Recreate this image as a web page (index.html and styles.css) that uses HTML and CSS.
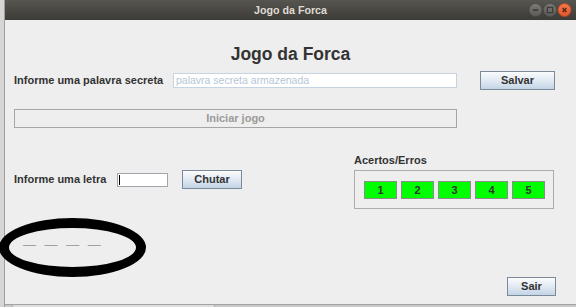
FILE: index.html
```html
<!DOCTYPE html>
<html lang="pt">
<head>
<meta charset="utf-8">
<title>Jogo da Forca</title>
<link rel="stylesheet" href="styles.css">
</head>
<body>
<div class="screen">
  <div class="side"></div>
  <div class="window">
    <header class="titlebar">
      <span class="spacer"></span>
      <span class="title">Jogo da Forca</span>
      <svg class="controls" width="44" height="20" viewBox="0 0 44 20" aria-hidden="true">
        <defs>
          <linearGradient id="gGrey" x1="0" y1="0" x2="0" y2="1">
            <stop offset="0" stop-color="#7c7b76"/>
            <stop offset="1" stop-color="#5c5b57"/>
          </linearGradient>
          <linearGradient id="gOrange" x1="0" y1="0" x2="0" y2="1">
            <stop offset="0" stop-color="#f27a4e"/>
            <stop offset="1" stop-color="#e2552a"/>
          </linearGradient>
        </defs>
        <circle cx="7.5" cy="10" r="6.5" fill="url(#gGrey)" stroke="#4a4945" stroke-width="0.8"/>
        <line x1="4.8" y1="10" x2="10.2" y2="10" stroke="#3a3935" stroke-width="1.6"/>
        <circle cx="22" cy="10" r="6.5" fill="url(#gGrey)" stroke="#4a4945" stroke-width="0.8"/>
        <rect x="19.3" y="7.3" width="5.4" height="5.4" fill="none" stroke="#3a3935" stroke-width="1.2"/>
        <circle cx="36.5" cy="10" r="6.5" fill="url(#gOrange)" stroke="#b8451f" stroke-width="0.8"/>
        <path d="M34.6 8.1 L38.4 11.9 M38.4 8.1 L34.6 11.9" stroke="#5a2412" stroke-width="1.4"/>
      </svg>
    </header>
    <main class="content">
      <h1 class="heading">Jogo da Forca</h1>
      <div class="form">
        <div class="row row-secret">
          <span class="label label-secret">Informe uma palavra secreta</span>
          <div class="field field-secret"><span class="placeholder">palavra secreta armazenada</span></div>
          <button class="btn btn-salvar" type="button">Salvar</button>
        </div>
        <button class="btn-disabled" type="button" disabled>Iniciar jogo</button>
        <div class="lower">
          <div class="play">
            <div class="row row-letter">
              <span class="label label-letter">Informe uma letra</span>
              <div class="field field-letter"><span class="caret"></span></div>
              <button class="btn btn-chutar" type="button">Chutar</button>
            </div>
            <div class="word"><span class="dashes">— — — —</span></div>
          </div>
          <div class="score">
            <span class="label label-score">Acertos/Erros</span>
            <div class="score-box">
              <span class="cell">1</span>
              <span class="cell">2</span>
              <span class="cell">3</span>
              <span class="cell">4</span>
              <span class="cell">5</span>
            </div>
            <button class="btn btn-sair" type="button">Sair</button>
          </div>
        </div>
      </div>
    </main>
    <footer class="bottom"><span class="bottom-seg"></span></footer>
  </div>
</div>
</body>
</html>
```

FILE: styles.css
```css
* { box-sizing: border-box; }

html, body {
  margin: 0;
  padding: 0;
  width: 576px;
  height: 307px;
  overflow: hidden;
  font-family: "Liberation Sans", Arial, sans-serif;
  background: #d4d4d4;
}

.screen {
  display: flex;
  width: 576px;
  height: 307px;
}

.side {
  flex: none;
  width: 5px;
  background: #d6d6d6;
  border-right: 1px solid #9e9e9e;
}

.window {
  flex: 1;
  display: flex;
  flex-direction: column;
  min-width: 0;
}

/* title bar */
.titlebar {
  flex: none;
  height: 20px;
  display: grid;
  grid-template-columns: 1fr auto 1fr;
  align-items: center;
  background: linear-gradient(#57554f, #3d3b37);
}

.title {
  color: #dfdbd2;
  font-weight: bold;
  font-size: 10.7px;
  line-height: 20px;
}

.controls {
  justify-self: end;
  margin-right: 4px;
  display: block;
}

/* content */
.content {
  flex: 1;
  background: #eeeeee;
  display: flex;
  flex-direction: column;
  color: #333333;
}

.heading {
  margin: 24px 0 0 0;
  font-size: 17.5px;
  line-height: 20px;
  font-weight: bold;
  text-align: center;
  color: #333333;
}

.form {
  padding: 0 21px 0 9px;
  display: flex;
  flex-direction: column;
}

.row {
  display: flex;
  align-items: center;
  height: 19px;
}

.row-secret { margin-top: 7px; }

.label {
  font-weight: bold;
  font-size: 11px;
  line-height: 13px;
  color: #333333;
  white-space: nowrap;
}

.label-secret { flex: none; width: 159px; }
.label-letter { flex: none; width: 103px; }

.field {
  flex: none;
  background: #ffffff;
  display: flex;
  align-items: center;
}

.field-secret {
  width: 284px;
  height: 15px;
  border: 1px solid #c6d3e0;
  padding-left: 2px;
}

.placeholder {
  font-size: 10.5px;
  line-height: 13px;
  color: #b6c6d8;
  white-space: nowrap;
}

.field-letter {
  width: 51px;
  height: 14px;
  border: 1px solid #9ea5ac;
  padding-left: 1px;
}

.caret {
  display: block;
  width: 1px;
  height: 10px;
  background: #000000;
}

.btn {
  flex: none;
  height: 19px;
  padding: 0;
  margin: 0;
  border: 1px solid #7a8a99;
  border-radius: 0;
  background: linear-gradient(#fbfcfd 0%, #e9eff6 35%, #d5e1ed 70%, #c4d4e6 100%);
  font-family: "Liberation Sans", Arial, sans-serif;
  font-weight: bold;
  font-size: 11px;
  line-height: 13px;
  color: #333333;
  display: flex;
  align-items: center;
  justify-content: center;
}

.btn-salvar { width: 75px; margin-left: 23px; }
.btn-chutar { width: 60px; margin-left: 14px; }
.btn-sair { width: 49px; height: 19px; margin-top: 68px; align-self: flex-end; margin-right: -1px; }

.btn-disabled {
  margin: 19px 0 0 0;
  width: 443px;
  height: 19px;
  padding: 0;
  border: 1px solid #a6a6a6;
  border-radius: 0;
  background: #eeeeee;
  font-family: "Liberation Sans", Arial, sans-serif;
  font-weight: bold;
  font-size: 11px;
  line-height: 13px;
  color: #9a9a9a;
  display: flex;
  align-items: center;
  justify-content: center;
}

/* lower area */
.lower {
  margin-top: 26px;
  display: flex;
}

.play {
  flex: 1;
  display: flex;
  flex-direction: column;
  padding-top: 16px;
}

.word {
  margin: 29px 0 0 -15px;
  width: 147px;
  height: 59px;
  border: 10px solid #000000;
  border-radius: 50%;
  padding: 9px 0 0 14px;
}

.dashes {
  display: block;
  font-size: 13px;
  line-height: 15px;
  color: #a0a0a0;
  word-spacing: 5px;
  white-space: nowrap;
}

.score {
  flex: none;
  width: 201px;
  display: flex;
  flex-direction: column;
}

.label-score { display: block; }

.score-box {
  margin-top: 3px;
  width: 200px;
  height: 39px;
  border: 1px solid #acacac;
  padding: 10px 9px 9px 9px;
  display: flex;
  gap: 4px;
}

.cell {
  flex: none;
  width: 33px;
  height: 18px;
  background: #00ff00;
  border: 1px solid #8c8c8c;
  font-weight: bold;
  font-size: 11px;
  color: #333333;
  display: flex;
  align-items: center;
  justify-content: center;
}

/* bottom strip */
.bottom {
  flex: none;
  height: 3px;
  border-top: 1px solid #a3a3a3;
  background: #c9c9c9;
  display: flex;
  padding-left: 7px;
}

.bottom-seg {
  display: block;
  width: 203px;
  background: #dedede;
  border-left: 1px solid #b0b0b0;
  border-right: 1px solid #b0b0b0;
}
```
